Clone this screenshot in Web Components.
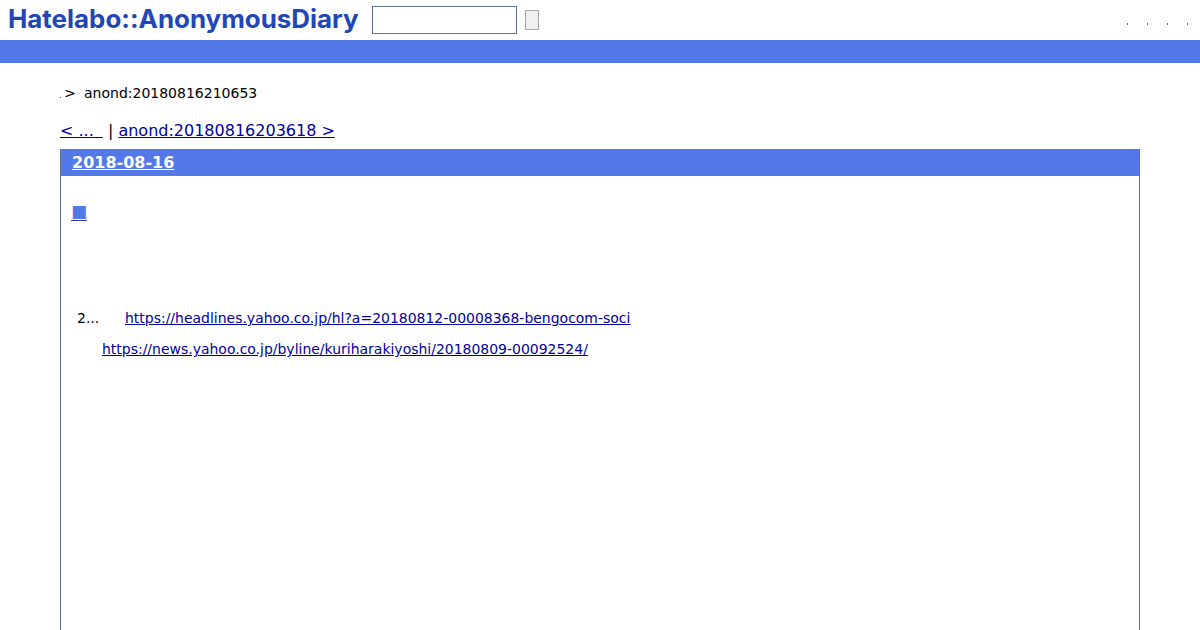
<!DOCTYPE html>
<html>
<head>
<meta charset="utf-8">
<title>Hatelabo::AnonymousDiary</title>
<style>
  html, body { margin: 0; padding: 0; background: #fff; }
  body { font-family: "DejaVu Sans", sans-serif; color: #000; height: 630px; overflow: hidden; }
</style>
</head>
<body>
<diary-header></diary-header>
<diary-crumbs current="anond:20180816210653"></diary-crumbs>
<diary-pager next="anond:20180816203618"></diary-pager>
<diary-day date="2018-08-16">
  <a class="mark" href="#">■</a>
  <diary-line indent="16" lead="2...">
    <a href="#">https://headlines.yahoo.co.jp/hl?a=20180812-00008368-bengocom-soci</a>
  </diary-line>
  <diary-line indent="41">
    <a href="#">https://news.yahoo.co.jp/byline/kuriharakiyoshi/20180809-00092524/</a>
  </diary-line>
</diary-day>

<script>
const headerTemplate = document.createElement("template");
headerTemplate.innerHTML = `
  <style>
    :host { display: block; }
    .top {
      display: flex;
      align-items: center;
      height: 40px;
      padding: 0 12px 0 8px;
    }
    .logo {
      font: 700 25.9px/38px "Inter", sans-serif;
      color: #2146b8;
      white-space: nowrap;
      width: 364px;
      margin-bottom: 2px;
    }
    input {
      box-sizing: border-box;
      width: 145px;
      height: 28px;
      margin: 0 8px 0 0;
      padding: 0;
      background: #fff;
      border: 1px solid #5f7390;
    }
    button {
      box-sizing: border-box;
      width: 14px;
      height: 20px;
      margin: 0;
      padding: 0;
      background: #efefef;
      border: 1px solid #a9a9a9;
    }
    .tools {
      display: flex;
      gap: 19px;
      margin-left: auto;
      padding-top: 8px;
    }
    .tools i { display: block; width: 1px; height: 2px; background: #666; }
    .bar { height: 23px; background: #5279e7; }
  </style>
  <div class="top">
    <div class="logo">Hatelabo::AnonymousDiary</div>
    <input type="text">
    <button type="button"></button>
    <div class="tools"><i></i><i></i><i></i><i></i></div>
  </div>
  <div class="bar"></div>
`;

class DiaryHeader extends HTMLElement {
  constructor() {
    super();
    this.attachShadow({ mode: "open" });
    this.shadowRoot.appendChild(headerTemplate.content.cloneNode(true));
  }
}

const crumbsTemplate = document.createElement("template");
crumbsTemplate.innerHTML = `
  <style>
    :host {
      display: block;
      padding: 22px 60px 0;
      font-size: 14px;
      line-height: 17px;
    }
    .row { display: flex; align-items: center; }
    .dot { width: 1px; height: 1px; background: #444; margin: 8px 3px 0 0; }
    .gt { width: 20px; font-size: 14.4px; }
  </style>
  <div class="row"><span class="dot"></span><span class="gt">&gt;</span><span class="current"></span></div>
`;

class DiaryCrumbs extends HTMLElement {
  constructor() {
    super();
    this.attachShadow({ mode: "open" });
    this.shadowRoot.appendChild(crumbsTemplate.content.cloneNode(true));
  }
  connectedCallback() {
    this.shadowRoot.querySelector(".current").textContent = this.getAttribute("current");
  }
}

const pagerTemplate = document.createElement("template");
pagerTemplate.innerHTML = `
  <style>
    :host {
      display: block;
      padding: 19px 60px 0;
      font-size: 16px;
      line-height: 19px;
      height: 28px;
    }
    a { color: #0000a0; }
    .gap { letter-spacing: 4px; }
  </style>
  <a href="#">&lt; ...<span class="gap">&nbsp;</span></a>&nbsp;| <a class="next" href="#"></a>
`;

class DiaryPager extends HTMLElement {
  constructor() {
    super();
    this.attachShadow({ mode: "open" });
    this.shadowRoot.appendChild(pagerTemplate.content.cloneNode(true));
  }
  connectedCallback() {
    this.shadowRoot.querySelector(".next").textContent = this.getAttribute("next") + " >";
  }
}

const dayTemplate = document.createElement("template");
dayTemplate.innerHTML = `
  <style>
    :host {
      display: block;
      box-sizing: border-box;
      margin: 0 60px;
      height: 481px;
      border: 1px solid #5f7390;
      border-bottom: 0;
      border-top: 0;
    }
    h2 {
      margin: 0;
      height: 27px;
      padding-left: 11px;
      background: #5279e7;
      font-size: 16px;
      line-height: 27px;
      font-weight: 700;
    }
    h2 a { color: #fff; }
    .body { padding: 27px 0 0 10px; font-size: 14px; }
    ::slotted(a.mark) {
      display: block;
      width: max-content;
      height: 17px;
      line-height: 17px;
      margin-bottom: 90px;
      color: #5279e7;
      font-size: 17px;
      text-decoration-color: #2a3f8f;
      text-underline-offset: 3px;
    }
  </style>
  <h2><a class="date" href="#"></a></h2>
  <div class="body"><slot></slot></div>
`;

class DiaryDay extends HTMLElement {
  constructor() {
    super();
    this.attachShadow({ mode: "open" });
    this.shadowRoot.appendChild(dayTemplate.content.cloneNode(true));
  }
  connectedCallback() {
    this.shadowRoot.querySelector(".date").textContent = this.getAttribute("date");
  }
}

const lineTemplate = document.createElement("template");
lineTemplate.innerHTML = `
  <style>
    :host {
      display: flex;
      height: 31px;
      font-size: 13.98px;
      line-height: 17px;
      padding-left: var(--indent, 0);
      color: #000;
    }
    .lead { width: 48px; }
    .lead:empty { display: none; }
    ::slotted(a) { color: #0000a0; }
  </style>
  <span class="lead"></span><span><slot></slot></span>
`;

class DiaryLine extends HTMLElement {
  constructor() {
    super();
    this.attachShadow({ mode: "open" });
    this.shadowRoot.appendChild(lineTemplate.content.cloneNode(true));
  }
  connectedCallback() {
    this.style.setProperty("--indent", (this.getAttribute("indent") - 10) + "px");
    this.shadowRoot.querySelector(".lead").textContent = this.getAttribute("lead") || "";
  }
}

customElements.define("diary-header", DiaryHeader);
customElements.define("diary-crumbs", DiaryCrumbs);
customElements.define("diary-pager", DiaryPager);
customElements.define("diary-day", DiaryDay);
customElements.define("diary-line", DiaryLine);
</script>
</body>
</html>
